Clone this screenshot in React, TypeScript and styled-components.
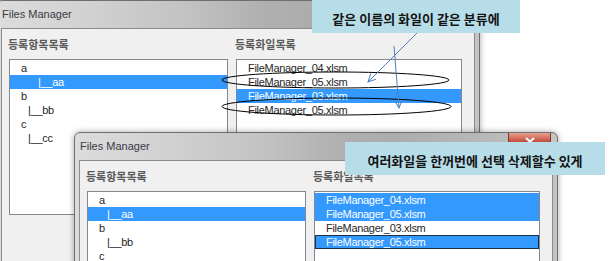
import styled, { createGlobalStyle } from "styled-components";

const GlobalStyle = createGlobalStyle`
  html, body {
    margin: 0;
    padding: 0;
    background: #ffffff;
  }
  body {
    font-family: "Liberation Sans", Arial, sans-serif;
  }
`;

type Item = {
  text: string;
  indent?: number;
  selected?: boolean;
  focused?: boolean;
};

type WindowData = {
  left: number;
  top: number;
  tree: Item[];
  files: Item[];
};

const WINDOWS: WindowData[] = [
  {
    left: -4,
    top: 0,
    tree: [
      { text: "a" },
      { text: "|__aa", indent: 17, selected: true },
      { text: "b" },
      { text: "|__bb", indent: 7 },
      { text: "c" },
      { text: "|__cc", indent: 7 },
    ],
    files: [
      { text: "FileManager_04.xlsm" },
      { text: "FileManager_05.xlsm" },
      { text: "FileManager_03.xlsm", selected: true },
      { text: "FileManager_05.xlsm" },
    ],
  },
  {
    left: 74,
    top: 132,
    tree: [
      { text: "a" },
      { text: "|__aa", indent: 8, selected: true },
      { text: "b" },
      { text: "|__bb", indent: 8 },
      { text: "c" },
    ],
    files: [
      { text: "FileManager_04.xlsm", selected: true },
      { text: "FileManager_05.xlsm", selected: true },
      { text: "FileManager_03.xlsm" },
      { text: "FileManager_05.xlsm", selected: true, focused: true },
    ],
  },
];

function FileWindow({ data }: { data: WindowData }) {
  return (
    <WindowFrame $left={data.left} $top={data.top}>
      <TitleBar>
        <Title>Files Manager</Title>
        <CloseButton>
          <svg width="10" height="9" viewBox="0 0 10 9">
            <path d="M1,1 L9,8 M9,1 L1,8" stroke="#ffffff" strokeWidth="2" />
          </svg>
        </CloseButton>
      </TitleBar>
      <Client>
        <Column>
          <Label>등록항목목록</Label>
          <ListBox $width={219}>
            {data.tree.map((item, i) => (
              <Row
                key={i}
                $indent={item.indent ?? 0}
                $selected={item.selected}
                $focused={item.focused}
              >
                {item.text}
              </Row>
            ))}
          </ListBox>
        </Column>
        <Column>
          <Label>등록화일목록</Label>
          <ListBox $width={226}>
            {data.files.map((item, i) => (
              <Row
                key={i}
                $indent={0}
                $selected={item.selected}
                $focused={item.focused}
              >
                {item.text}
              </Row>
            ))}
          </ListBox>
        </Column>
      </Client>
    </WindowFrame>
  );
}

export default function App() {
  return (
    <>
      <GlobalStyle />
      <Desktop>
        {WINDOWS.map((w, i) => (
          <FileWindow key={i} data={w} />
        ))}
        <Marks viewBox="0 0 610 261">
          <defs>
            <marker
              id="head"
              markerWidth="10"
              markerHeight="10"
              refX="8"
              refY="4"
              orient="auto"
              markerUnits="userSpaceOnUse"
            >
              <path d="M0,0 L8,4 L0,8" fill="none" stroke="#4f81bd" strokeWidth="1" />
            </marker>
          </defs>
          <ellipse cx="335.5" cy="80" rx="113.5" ry="8" fill="none" stroke="#000" />
          <ellipse cx="336.5" cy="106.5" rx="114.5" ry="8.5" fill="none" stroke="#000" />
          <line x1="417" y1="33" x2="368" y2="82" stroke="#4f81bd" markerEnd="url(#head)" />
          <line x1="394" y1="46" x2="399" y2="108" stroke="#4f81bd" markerEnd="url(#head)" />
        </Marks>
        <Callout $left={312} $top={0} $width={208}>
          같은 이름의 화일이 같은 분류에
        </Callout>
        <Callout $left={345} $top={142} $width={260}>
          여러화일을 한꺼번에 선택 삭제할수 있게
        </Callout>
      </Desktop>
    </>
  );
}

const Desktop = styled.div`
  position: relative;
  width: 610px;
  height: 261px;
  overflow: hidden;
  background: #ffffff;
`;

const WindowFrame = styled.div<{ $left: number; $top: number }>`
  position: absolute;
  left: ${(p) => p.$left}px;
  top: ${(p) => p.$top}px;
  width: 484px;
  height: 320px;
  box-sizing: border-box;
  display: flex;
  flex-direction: column;
  padding: 0 4px 4px;
  border: 1px solid #6f6f6f;
  border-radius: 6px 6px 0 0;
  background: linear-gradient(
    90deg,
    #dcdcdc 0%,
    #d2d2d2 18%,
    #c2c2c2 40%,
    #b0b0b0 55%,
    #acacac 66%,
    #b8b8b8 85%,
    #c4c4c4 100%
  );
  box-shadow: 0 0 6px rgba(0, 0, 0, 0.35);
`;

const TitleBar = styled.div`
  position: relative;
  height: 26px;
  display: flex;
  align-items: center;
  padding-left: 1px;
  padding-bottom: 1px;
`;

const Title = styled.span`
  font-size: 11px;
  color: #3a3a44;
`;

const CloseButton = styled.div`
  position: absolute;
  top: 0;
  right: 2px;
  width: 43px;
  height: 18px;
  box-sizing: border-box;
  display: flex;
  align-items: center;
  justify-content: center;
  border: 1px solid #7a3a30;
  border-top: none;
  border-radius: 0 0 4px 4px;
  background: linear-gradient(#e8a090, #c75040 50%, #d06050);
`;

const Client = styled.div`
  flex: 1;
  display: flex;
  gap: 8px;
  padding: 8px 12px 0 7px;
  background: #f0f0f0;
  border: 1px solid #8c8c8c;
`;

const Column = styled.div`
  display: flex;
  flex-direction: column;
  gap: 8px;
`;

const Label = styled.div`
  height: 14px;
  line-height: 14px;
  margin-left: -1px;
  font-family: "Noto Sans CJK KR", sans-serif;
  font-size: 11px;
  font-weight: 700;
  color: #5a5a5a;
`;

const ListBox = styled.div<{ $width: number }>`
  width: ${(p) => p.$width}px;
  height: 156px;
  box-sizing: border-box;
  padding-top: 1px;
  border: 1px solid #828790;
  background: #ffffff;
`;

const Row = styled.div<{ $indent: number; $selected?: boolean; $focused?: boolean }>`
  height: 14px;
  line-height: 12px;
  box-sizing: border-box;
  padding-left: ${(p) => 10 + p.$indent}px;
  border: 1px solid ${(p) => (p.$focused ? "#1c2f44" : "transparent")};
  background: ${(p) => (p.$selected ? "#3399ff" : "transparent")};
  color: ${(p) => (p.$selected ? "#ffffff" : "#262626")};
  font-size: 11px;
  letter-spacing: -0.3px;
  white-space: pre;
`;

const Marks = styled.svg`
  position: absolute;
  left: 0;
  top: 0;
  width: 610px;
  height: 261px;
  pointer-events: none;
`;

const Callout = styled.div<{ $left: number; $top: number; $width: number }>`
  position: absolute;
  left: ${(p) => p.$left}px;
  top: ${(p) => p.$top}px;
  width: ${(p) => p.$width}px;
  height: 33px;
  box-sizing: border-box;
  padding-top: 4px;
  display: flex;
  align-items: center;
  justify-content: center;
  background: #b7dee8;
  font-family: "Noto Sans CJK KR", sans-serif;
  font-size: 13px;
  font-weight: 700;
  color: #141414;
  white-space: nowrap;
`;
